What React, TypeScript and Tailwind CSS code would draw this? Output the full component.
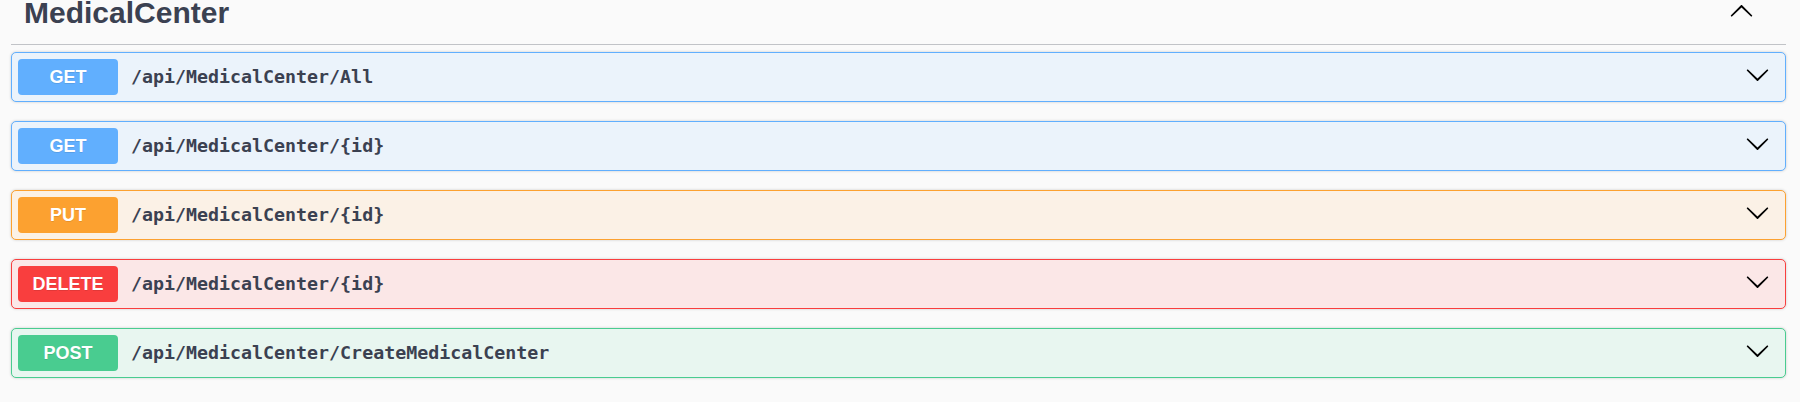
import React from 'react';

type Op = { method: string; path: string; badge: string; border: string; bg: string };

const OPS: Op[] = [
    { method: 'GET', path: '/api/MedicalCenter/All', badge: 'bg-[#61affe]', border: 'border-[#61affe]', bg: 'bg-[#ebf3fb]' },
    { method: 'GET', path: '/api/MedicalCenter/{id}', badge: 'bg-[#61affe]', border: 'border-[#61affe]', bg: 'bg-[#ebf3fb]' },
    { method: 'PUT', path: '/api/MedicalCenter/{id}', badge: 'bg-[#fca130]', border: 'border-[#fca130]', bg: 'bg-[#fbf1e6]' },
    { method: 'DELETE', path: '/api/MedicalCenter/{id}', badge: 'bg-[#f93e3e]', border: 'border-[#f93e3e]', bg: 'bg-[#fbe7e7]' },
    { method: 'POST', path: '/api/MedicalCenter/CreateMedicalCenter', badge: 'bg-[#49cc90]', border: 'border-[#49cc90]', bg: 'bg-[#e8f6f0]' },
];

// swagger's arrow glyph, points down by default
const Arrow: React.FC<{ up?: boolean }> = ({ up }) => (
    <svg width="25" height="25" viewBox="0 0 20 20" className={up ? 'rotate-180' : ''}>
        <path
            fill="#000"
            d="M17.418 6.109c.272-.268.709-.268.979 0s.271.701 0 .969l-7.908 7.83c-.27.268-.707.268-.979 0l-7.908-7.83c-.27-.268-.27-.701 0-.969.271-.268.709-.268.979 0L10 13.25l7.418-7.141z"
        />
    </svg>
);

const OpBlock: React.FC<{ op: Op }> = ({ op }) => (
    <div className={`flex h-[50px] items-center rounded-[5px] border px-[6px] shadow-[0_0_3px_rgba(0,0,0,0.19)] ${op.border} ${op.bg}`}>
        <div
            className={`flex h-[36px] w-[100px] shrink-0 items-center justify-center rounded-[4px] text-[18px] font-bold text-white [text-shadow:0_1px_0_rgba(0,0,0,0.1)] ${op.badge}`}
            style={{ fontFamily: '"Liberation Sans", Arial, sans-serif' }}
        >
            {op.method}
        </div>
        <div
            className="flex-1 pl-[13px] text-[18.3px] font-bold text-[#3b4151]"
            style={{ fontFamily: '"DejaVu Sans Mono", monospace' }}
        >
            {op.path}
        </div>
        <div className="mr-[9px] -mt-[5px]">
            <Arrow />
        </div>
    </div>
);

export default function App() {
    return (
        <div className="min-h-[402px] w-[1800px] bg-[#fafafa]" style={{ fontFamily: '"Liberation Sans", Arial, sans-serif' }}>
            <div className="ml-[11px] w-[1775px]">
                <div className="flex h-[45px] items-start border-b border-[#c1c3c7] pl-[13px] pr-[32px]">
                    <h3 className="flex-1 text-[30px] font-bold leading-[26px] text-[#3b4151]">MedicalCenter</h3>
                    <div className="-mt-[1px]">
                        <Arrow up />
                    </div>
                </div>
                <div className="mt-[7px] flex flex-col gap-[19px]">
                    {OPS.map((op, i) => (
                        <OpBlock key={i} op={op} />
                    ))}
                </div>
            </div>
        </div>
    );
}
